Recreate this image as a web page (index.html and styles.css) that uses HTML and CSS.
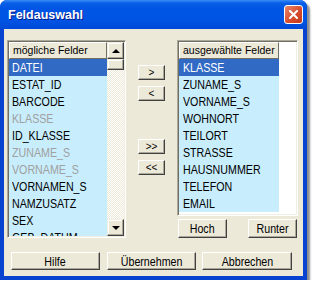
FILE: index.html
```html
<!DOCTYPE html>
<html lang="de">
<head>
    <meta charset="UTF-8">
    <title>Feldauswahl</title>
    <link rel="stylesheet" href="styles.css">
</head>
<body>
    <div class="window">
        <div class="titlebar">
            <span class="title">Feldauswahl</span>
            <span class="close">
                <svg width="9" height="9" viewBox="0 0 9 9"><path d="M1 1L8 8M8 1L1 8" stroke="#fff" stroke-width="2" stroke-linecap="square"/></svg>
            </span>
        </div>

        <div class="client">
            <div class="main">
                <div class="listbox left">
                    <div class="listcol">
                        <div class="header">mögliche Felder</div>
                        <div class="item selected"><span class="txt">DATEI</span></div>
                        <div class="item"><span class="txt">ESTAT_ID</span></div>
                        <div class="item"><span class="txt">BARCODE</span></div>
                        <div class="item used"><span class="txt">KLASSE</span></div>
                        <div class="item"><span class="txt">ID_KLASSE</span></div>
                        <div class="item used"><span class="txt">ZUNAME_S</span></div>
                        <div class="item used"><span class="txt">VORNAME_S</span></div>
                        <div class="item"><span class="txt">VORNAMEN_S</span></div>
                        <div class="item"><span class="txt">NAMZUSATZ</span></div>
                        <div class="item"><span class="txt">SEX</span></div>
                        <div class="item"><span class="txt">GEB_DATUM</span></div>
                    </div>
                    <div class="scrollbar">
                        <div class="sbtn"><span class="arrow up"></span></div>
                        <div class="thumb"></div>
                        <div class="track"></div>
                        <div class="sbtn"><span class="arrow down"></span></div>
                    </div>
                </div>

                <div class="movers">
                    <button class="btn mover">&gt;</button>
                    <button class="btn mover">&lt;</button>
                    <button class="btn mover far">&gt;&gt;</button>
                    <button class="btn mover">&lt;&lt;</button>
                </div>

                <div class="rightcol">
                    <div class="listbox right">
                        <div class="listcol">
                            <div class="header">ausgewählte Felder</div>
                            <div class="item selected"><span class="txt">KLASSE</span></div>
                            <div class="item"><span class="txt">ZUNAME_S</span></div>
                            <div class="item"><span class="txt">VORNAME_S</span></div>
                            <div class="item"><span class="txt">WOHNORT</span></div>
                            <div class="item"><span class="txt">TEILORT</span></div>
                            <div class="item"><span class="txt">STRASSE</span></div>
                            <div class="item"><span class="txt">HAUSNUMMER</span></div>
                            <div class="item"><span class="txt">TELEFON</span></div>
                            <div class="item"><span class="txt">EMAIL</span></div>
                        </div>
                    </div>
                    <div class="order">
                        <button class="btn order-btn"><span class="txt">Hoch</span></button>
                        <button class="btn order-btn"><span class="txt">Runter</span></button>
                    </div>
                </div>
            </div>

            <div class="actions">
                <button class="btn action"><span class="txt">Hilfe</span></button>
                <button class="btn action"><span class="txt">Übernehmen</span></button>
                <button class="btn action"><span class="txt">Abbrechen</span></button>
            </div>
        </div>
    </div>
</body>
</html>
```

FILE: styles.css
```css
body {
    margin: 0;
    background-color: #fff;
    font-family: 'Liberation Sans', Arial, sans-serif;
}

.window {
    width: 307px;
    height: 280px;
    background-color: #0842d0;
    border-radius: 7px 7px 0 0;
    box-shadow: 3px 3px 2px rgba(0, 0, 0, 0.45);
    display: flex;
    flex-direction: column;
}

.titlebar {
    height: 29px;
    border-radius: 7px 7px 0 0;
    background: linear-gradient(#3a8cf8 0, #0a5fe6 3px, #0055e5 8px, #0054e3 20px, #0049d8 29px);
    display: flex;
    align-items: center;
    padding: 0 8px;
    box-sizing: border-box;
}

.title {
    flex-grow: 1;
    color: #fff;
    font-weight: bold;
    font-size: 12.5px;
    text-shadow: 1px 1px #0a1a8a;
    margin-top: 1px;
}

.close {
    width: 19px;
    height: 19px;
    box-sizing: border-box;
    border: 1px solid #fff;
    border-radius: 3px;
    background: linear-gradient(135deg, #e9876b, #d6492a 60%, #c03a1c);
    display: flex;
    align-items: center;
    justify-content: center;
    margin-right: -4px;
    margin-top: -1px;
}

.client {
    margin: 0 4px 4px 4px;
    flex-grow: 1;
    background-color: #ece9d8;
}

.main {
    display: flex;
    padding: 11px 0 0 3px;
    height: 198px;
}

/* narrow system font: squeeze the regular face */
.txt {
    display: inline-block;
    transform: scaleX(0.82);
    transform-origin: 0 50%;
}

.listbox {
    box-sizing: border-box;
    border: 1px solid;
    border-color: #aca899 #fff #fff #aca899;
    box-shadow: inset 1px 1px #716f64, inset -1px -1px #f1efe2;
    padding: 1px;
    display: flex;
    background-color: #fff;
    overflow: hidden;
}

.left {
    width: 119px;
    height: 198px;
}

.right {
    width: 121px;
    height: 176px;
}

.listcol {
    width: 98px;
    overflow: hidden;
}

.right .listcol {
    width: 100px;
}

.header {
    height: 17px;
    box-sizing: border-box;
    background-color: #ece9d8;
    border: 1px solid;
    border-color: #fff #716f64 #716f64 #fff;
    font-size: 10.5px;
    line-height: 15px;
    padding-left: 3px;
    color: #000;
    white-space: nowrap;
}

.item {
    height: 17px;
    line-height: 17px;
    font-size: 13px;
    padding-left: 3px;
    background-color: #c8eefd;
    color: #000;
    white-space: nowrap;
}

.right .item {
    padding-left: 4px;
}

.item.selected {
    background-color: #316ac5;
    color: #fff;
}

.item.used {
    color: #a0a0a0;
}

.scrollbar {
    width: 17px;
    display: flex;
    flex-direction: column;
}

.sbtn,
.thumb {
    box-sizing: border-box;
    background-color: #ece9d8;
    border: 1px solid;
    border-color: #f1efe2 #404040 #404040 #f1efe2;
    box-shadow: inset -1px -1px #aca899, inset 1px 1px #fff;
}

.sbtn {
    height: 17px;
    display: flex;
    align-items: center;
    justify-content: center;
}

.thumb {
    height: 11px;
}

.track {
    flex-grow: 1;
    background: repeating-conic-gradient(#fff 0 25%, #ece9d8 0 50%) 0 0 / 2px 2px;
}

.arrow {
    width: 0;
    height: 0;
    border-left: 4px solid transparent;
    border-right: 4px solid transparent;
}

.arrow.up {
    border-bottom: 4px solid #000;
}

.arrow.down {
    border-top: 4px solid #000;
}

.btn {
    box-sizing: border-box;
    margin: 0;
    padding: 0;
    background-color: #ece9d8;
    border: 1px solid;
    border-color: #fff #404040 #404040 #fff;
    box-shadow: inset -1px -1px #aca899;
    color: #000;
    font-family: 'Liberation Sans', Arial, sans-serif;
    font-size: 13px;
}

.btn .txt {
    transform-origin: 50% 50%;
}

.movers {
    display: flex;
    flex-direction: column;
    gap: 6px;
    width: 27px;
    margin-left: 12px;
    padding-top: 25px;
}

.mover {
    width: 27px;
    height: 15px;
    font-size: 10px;
    line-height: 12px;
}

.mover.far {
    margin-top: 32px;
}

.rightcol {
    margin-left: 12px;
    width: 121px;
}

.order {
    display: flex;
    justify-content: space-between;
    margin-top: 3px;
    padding: 0 1px;
}

.order-btn {
    width: 49px;
    height: 19px;
}

.actions {
    display: flex;
    padding: 0 0 0 7px;
    margin-top: 14px;
}

.action {
    width: 89px;
    height: 18px;
    margin-right: 7px;
}

.action:nth-child(3) {
    margin-left: -1px;
    width: 90px;
}
```
